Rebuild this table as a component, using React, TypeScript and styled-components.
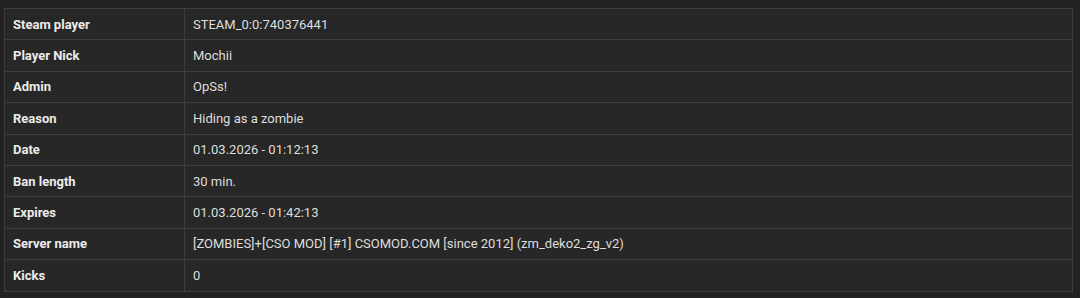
import React from "react";
import styled, { createGlobalStyle } from "styled-components";

const Global = createGlobalStyle`
  html, body { margin: 0; padding: 0; background: #222222; }
  body { font-family: Roboto, "Liberation Sans", Arial, sans-serif; }
`;

const Page = styled.div`
  padding: 8px 7px 0 4px;
`;

const Table = styled.table`
  width: 100%;
  border-collapse: collapse;
  background: #272727;
  border: 1px solid #3d3d3d;
  font-size: 13px;
`;

const Row = styled.tr`
  height: 31.4px;
`;

const Label = styled.th`
  width: 163px;
  text-align: left;
  font-weight: 700;
  color: #ececec;
  padding: 0 8px;
  border: 1px solid #3d3d3d;
  vertical-align: middle;
`;

const Value = styled.td`
  color: #dedede;
  padding: 0 8px;
  border: 1px solid #3d3d3d;
  vertical-align: middle;
`;

const rows: [string, string][] = [
  ["Steam player", "STEAM_0:0:740376441"],
  ["Player Nick", "Mochii"],
  ["Admin", "OpSs!"],
  ["Reason", "Hiding as a zombie"],
  ["Date", "01.03.2026 - 01:12:13"],
  ["Ban length", "30 min."],
  ["Expires", "01.03.2026 - 01:42:13"],
  ["Server name", "[ZOMBIES]+[CSO MOD] [#1] CSOMOD.COM [since 2012] (zm_deko2_zg_v2)"],
  ["Kicks", "0"],
];

export default function App() {
  return (
    <>
      <Global />
      <Page>
        <Table>
          <tbody>
            {rows.map(([k, v]) => (
              <Row key={k}>
                <Label>{k}</Label>
                <Value>{v}</Value>
              </Row>
            ))}
          </tbody>
        </Table>
      </Page>
    </>
  );
}
